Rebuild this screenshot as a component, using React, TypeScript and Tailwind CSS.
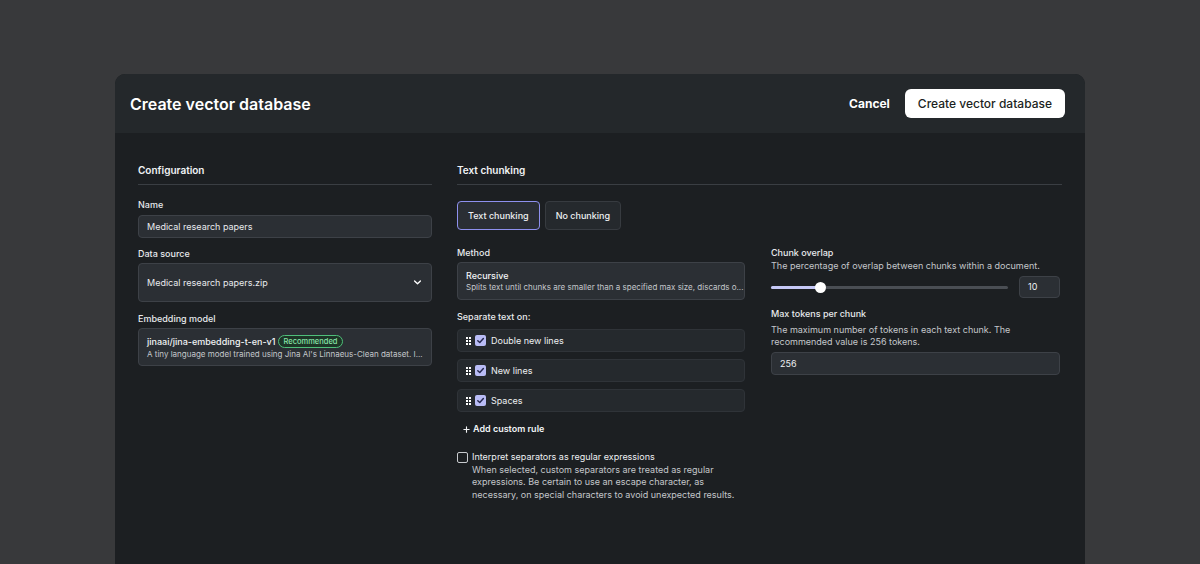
import { Plus } from 'lucide-react'

function Chevron({ className }: { className?: string }) {
  return (
    <svg viewBox="0 0 10 6" className={className} fill="none" stroke="currentColor" strokeWidth="1.6" strokeLinecap="round" strokeLinejoin="round">
      <path d="M1.5 1.2 5 4.6l3.5-3.4" />
    </svg>
  )
}

function Handle() {
  return (
    <div className="grid grid-cols-2 gap-x-[1px] gap-y-[1px]">
      {Array.from({ length: 6 }).map((_, i) => (
        <span key={i} className="block h-[2px] w-[2px] bg-white" />
      ))}
    </div>
  )
}

function Checked() {
  return (
    <span className="flex h-[11px] w-[11px] items-center justify-center rounded-[2px] bg-[#b9bcf6]">
      <svg viewBox="0 0 10 10" className="h-[9px] w-[9px]" fill="none" stroke="#23264d" strokeWidth="1.6" strokeLinecap="round" strokeLinejoin="round">
        <path d="M2 5.2 4.2 7.3 8.2 2.8" />
      </svg>
    </span>
  )
}

function Label({ children }: { children: React.ReactNode }) {
  return <div className="text-[9px] font-medium leading-[12px] text-[#e8eaed]">{children}</div>
}

function SectionHeading({ children }: { children: React.ReactNode }) {
  return (
    <div className="border-b border-[#3a3e43] pb-[7px] text-[10px] font-semibold leading-[14px] text-[#f1f3f5]">
      {children}
    </div>
  )
}

const separators = ['Double new lines', 'New lines', 'Spaces']

export default function App() {
  return (
    <div className="min-h-screen overflow-hidden bg-[#38393b] px-[115px] pt-[74px] font-['Inter',sans-serif]">
      <div className="h-[490px] overflow-hidden rounded-t-[10px] bg-[#1c1f22]">
        <div className="flex h-[59px] items-center justify-between bg-[#24282b] pl-[15px] pr-[20px]">
          <h1 className="text-[16px] font-semibold text-white">Create vector database</h1>
          <div className="flex items-center gap-[15px]">
            <button className="text-[12px] font-bold text-white">Cancel</button>
            <button className="h-[29px] rounded-[6px] bg-white px-[13px] text-[12px] font-medium text-[#1c1f22]">
              Create vector database
            </button>
          </div>
        </div>

        <div className="flex gap-[25px] px-[23px] pt-[30px]">
          {/* Configuration */}
          <div className="w-[294px] shrink-0">
            <SectionHeading>Configuration</SectionHeading>
            <div className="mt-[14px]">
              <Label>Name</Label>
              <div className="mt-[4px] flex h-[23px] items-center rounded-[4px] border border-[#3d4147] bg-[#2b2f34] px-[8px] text-[9px] text-[#e8eaed]">
                Medical research papers
              </div>
            </div>
            <div className="mt-[10px]">
              <Label>Data source</Label>
              <div className="mt-[3px] flex h-[39px] items-center justify-between rounded-[4px] border border-[#3d4147] bg-[#2b2f34] pl-[8px] pr-[9px] text-[9px] text-[#e8eaed]">
                <span>Medical research papers.zip</span>
                <Chevron className="h-[5px] w-[9px] text-white" />
              </div>
            </div>
            <div className="mt-[11px]">
              <Label>Embedding model</Label>
              <div className="mt-[3px] flex h-[38px] items-center justify-between rounded-[4px] border border-[#3d4147] bg-[#2b2f34] pl-[8px] pr-[12px]">
                <div className="flex flex-col gap-[1px] whitespace-nowrap">
                  <div className="flex items-center gap-[2px]">
                    <span className="text-[9px] font-medium leading-[13px] text-[#f1f3f5]">jinaai/jina-embedding-t-en-v1</span>
                    <span className="rounded-full border border-[#4fbf7a] bg-[#1d3527] px-[5px] text-[7.5px] font-medium leading-[11px] text-[#86e3a8]">
                      Recommended
                    </span>
                  </div>
                  <span className="text-[8px] leading-[11px] text-[#c4c7cb]">
                    A tiny language model trained using Jina AI's Linnaeus-Clean dataset. I...
                  </span>
                </div>
                <Chevron className="h-[2px] w-[3px] text-[#9ca0a5]" />
              </div>
            </div>
          </div>

          {/* Text chunking */}
          <div className="flex-1">
            <SectionHeading>Text chunking</SectionHeading>
            <div className="mt-[16px] flex gap-[5px]">
              <button className="h-[29px] rounded-[4px] border border-[#8e90ee] bg-[#2a2e34] px-[10px] text-[9px] font-medium text-[#eef0f2]">
                Text chunking
              </button>
              <button className="h-[29px] rounded-[4px] border border-[#373b40] bg-[#25292d] px-[10px] text-[9px] font-medium text-[#eef0f2]">
                No chunking
              </button>
            </div>

            <div className="mt-[17px] grid grid-cols-[288px_289px] gap-x-[26px]">
              <div>
                <Label>Method</Label>
                <div className="mt-[3px] flex h-[38px] items-center justify-between rounded-[4px] border border-[#3d4147] bg-[#2b2f34] pl-[8px] pr-[7px]">
                  <div className="flex flex-col whitespace-nowrap">
                    <span className="text-[9px] font-medium leading-[13px] text-[#f1f3f5]">Recursive</span>
                    <span className="text-[8px] leading-[11px] text-[#c4c7cb]">
                      Splits text until chunks are smaller than a specified max size, discards o...
                    </span>
                  </div>
                  <Chevron className="h-[3px] w-[4px] text-[#c4c7cb]" />
                </div>

                <div className="mt-[11px]">
                  <Label>Separate text on:</Label>
                  <div className="mt-[6px] flex flex-col gap-[7px]">
                    {separators.map((s) => (
                      <div
                        key={s}
                        className="flex h-[23px] items-center gap-[4px] rounded-[4px] border border-[#2f3338] bg-[#25292d] pl-[8px] text-[9px] text-[#eef0f2]"
                      >
                        <Handle />
                        <Checked />
                        <span className="ml-[1px]">{s}</span>
                      </div>
                    ))}
                  </div>
                </div>

                <div className="mt-[11px] flex items-center gap-[2px] pl-[5px] text-[9px] font-semibold leading-[12px] text-[#f1f3f5]">
                  <Plus className="h-[9px] w-[9px]" strokeWidth={3} />
                  Add custom rule
                </div>

                <div className="mt-[16px] flex gap-[4px]">
                  <span className="mt-[1px] h-[11px] w-[11px] shrink-0 rounded-[2px] border-[1.5px] border-[#c8cbcf]" />
                  <div className="text-[9px] leading-[12.5px]">
                    <div className="text-[#eef0f2]">Interpret separators as regular expressions</div>
                    <div className="text-[#c4c7cb]">
                      When selected, custom separators are treated as regular expressions. Be certain to use an escape character, as necessary, on special characters to avoid unexpected results.
                    </div>
                  </div>
                </div>
              </div>

              <div>
                <Label>Chunk overlap</Label>
                <div className="mt-[1px] text-[9px] leading-[12px] text-[#c4c7cb]">
                  The percentage of overlap between chunks within a document.
                </div>
                <div className="mt-[4px] flex items-center gap-[11px]">
                  <div className="relative h-[3px] flex-1 rounded-full bg-[#4a4e54]">
                    <div className="absolute left-0 top-0 h-[3px] w-[49px] rounded-full bg-[#c5c8f6]" />
                    <div className="absolute left-[44px] top-[-4px] h-[11px] w-[11px] rounded-full bg-white" />
                  </div>
                  <div className="flex h-[22px] w-[41px] items-center rounded-[4px] border border-[#3d4147] bg-[#2b2f34] px-[8px] text-[9px] text-[#eef0f2]">
                    10
                  </div>
                </div>
                <div className="mt-[10px]">
                  <Label>Max tokens per chunk</Label>
                  <div className="mt-[4px] text-[9px] leading-[12px] text-[#c4c7cb]">
                    The maximum number of tokens in each text chunk. The recommended value is 256 tokens.
                  </div>
                  <div className="mt-[4px] flex h-[23px] items-center rounded-[4px] border border-[#3d4147] bg-[#2b2f34] px-[8px] text-[9px] text-[#eef0f2]">
                    256
                  </div>
                </div>
              </div>
            </div>
          </div>
        </div>
      </div>
    </div>
  )
}
